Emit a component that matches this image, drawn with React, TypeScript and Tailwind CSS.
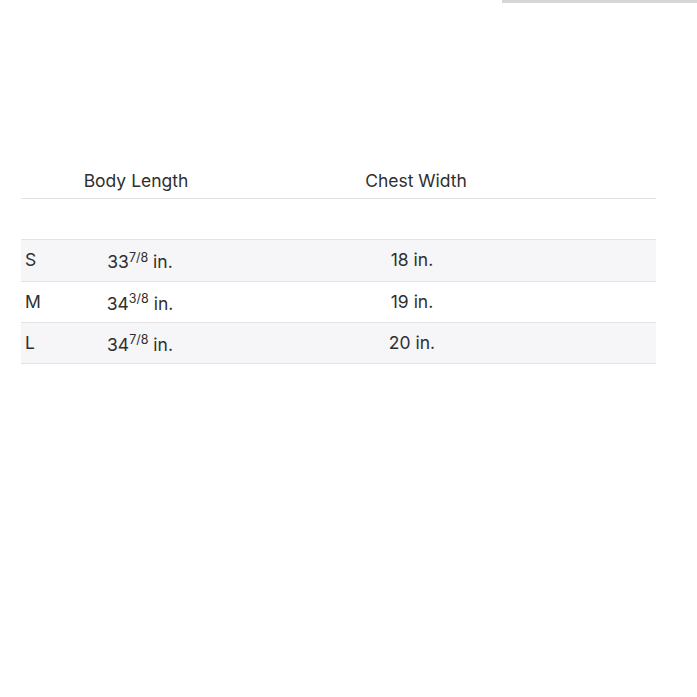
import React from "react";

const rows = [
  { size: "S", whole: "33", frac: "7/8", chest: "18 in.", bg: "bg-[#f6f6f8]", h: "h-[42px]" },
  { size: "M", whole: "34", frac: "3/8", chest: "19 in.", bg: "bg-white", h: "h-[41px]" },
  { size: "L", whole: "34", frac: "7/8", chest: "20 in.", bg: "bg-[#f6f6f8]", h: "h-[41px]" },
];

export default function App() {
  return (
    <div
      className="relative w-[697px] h-[697px] bg-white text-[#2f2f2f]"
      style={{ fontFamily: "Inter, 'Liberation Sans', sans-serif" }}
    >
      <div className="absolute top-0 left-[502px] w-[195px] h-[3px] bg-[#d6d6d6]" />
      <div className="pt-[164px] pl-[21px] w-[656px]">
        <div className="grid grid-cols-[40px_154px_398px_43px] h-[35px] border-b border-[#e3e3e3] text-[17.5px] items-start pt-[4px]">
          <div />
          <div className="text-center pr-[4px]">Body Length</div>
          <div className="text-center pl-[4px]">Chest Width</div>
          <div />
        </div>
        <div className="h-[41px] border-b border-[#e3e3e3]" />
        {rows.map((r) => (
          <div
            key={r.size}
            className={`grid grid-cols-[40px_154px_398px_43px] ${r.h} border-b border-[#e3e3e3] items-center text-[17.5px] ${r.bg}`}
          >
            <div className="pl-[4px]">{r.size}</div>
            <div className="text-center pt-[4px] pl-[4px]">
              {r.whole}
              <sup className="text-[12.5px] align-baseline relative top-[-0.55em]">{r.frac}</sup> in.
            </div>
            <div className="text-center pr-[4px]">{r.chest}</div>
            <div />
          </div>
        ))}
      </div>
    </div>
  );
}
